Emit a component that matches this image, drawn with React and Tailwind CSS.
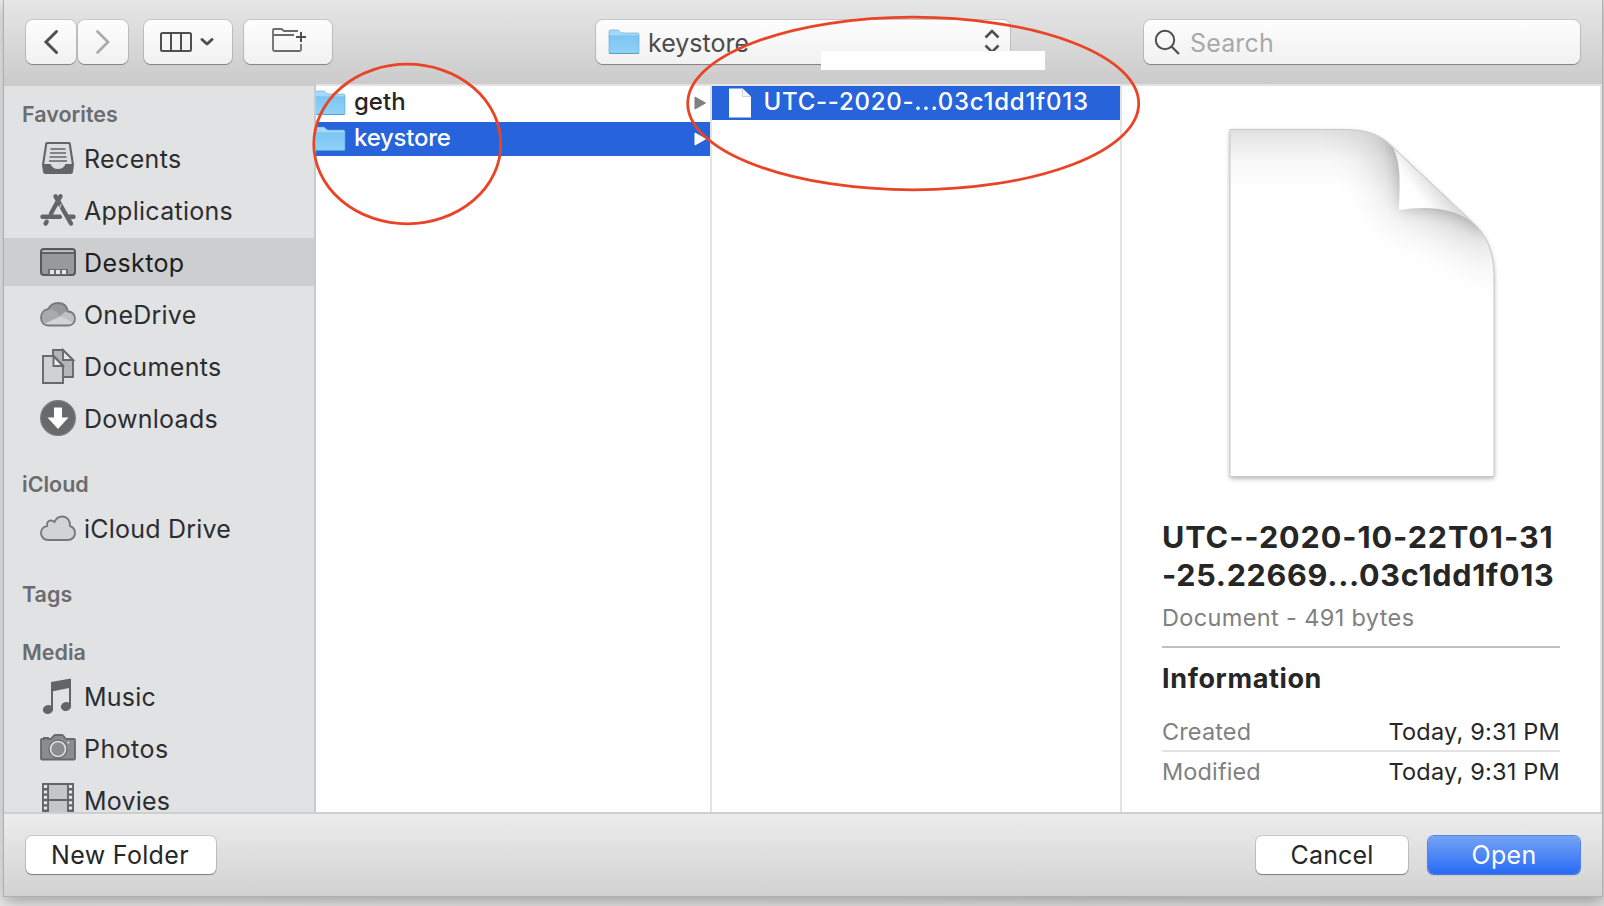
import React from "react";

function Folder({ className }) {
  return (
    <svg className={className} width="32" height="26" viewBox="0 0 32 26">
      <defs>
        <linearGradient id="fold" x1="0" y1="0" x2="0" y2="1">
          <stop offset="0" stopColor="#7cc5f2" />
          <stop offset="1" stopColor="#8fd2f8" />
        </linearGradient>
      </defs>
      <path d="M1 2.5Q1 1 2.500 1H9.500Q10.500 1 11.500 2.200Q13 4 14 4H29.500Q31 4 31 5.500V8H1Z" fill="#a5d9f8" />
      <path d="M1 6.300H31V23.500Q31 24.500 30 24.500H2Q1 24.500 1 23.500Z" fill="url(#fold)" />
      <path d="M1 2.500Q1 1 2.500 1H9.500Q10.500 1 11.500 2.200Q13 4 14 4H29.500Q31 4 31 5.500V23.500Q31 24.500 30 24.500H2Q1 24.500 1 23.500Z" fill="none" stroke="#5fa5d0" strokeWidth=".6" />
      <path d="M1.500 24.500H30.500" stroke="#5b9cc4" strokeWidth="1" />
    </svg>
  );
}

const G = "#636466";

const icons = {
  recents: (
    <g>
      <path d="M7 2H29Q30.500 2 30.800 3.500L34 24.500L33 32Q32.700 34 30.500 34H5.500Q3.300 34 3 32L2 24.500L5.200 3.500Q5.500 2 7 2Z" fill="#636466" />
      <path d="M7.300 4H28.700L31.800 24H25.500Q23.500 29 18 29T10.500 24H4.200Z" fill="#dcddde" />
      <path d="M10.500 9H25.500M10 13H26M9.500 17H26.500M9 21H27" stroke="#636466" strokeWidth="1.700" />
    </g>
  ),
  apps: (
    <g stroke={G} strokeWidth="4.400" strokeLinecap="round">
      <path d="M20.500 4.300L11 21.500M15.500 4.300L31 31.500M2.500 24.700H20M29 24.700H33.500M6.700 29.700L5.600 31.500" />
      <path d="M21 12.500L19 18L24.500 28" stroke="#e1e2e4" strokeWidth="1" fill="none" />
    </g>
  ),
  desktop: (
    <g>
      <rect x="1" y="5" width="34" height="26" rx="3" fill="#98999b" stroke="#57585a" strokeWidth="2" />
      <path d="M2.500 6.500H33.500V8H2.500Z" fill="#c5c6c8" />
      <path d="M2 9H34" stroke="#57585a" strokeWidth="1.800" />
      <path d="M8 25H28V31H8Z" fill="#6d6e70" />
      <path d="M10 26H14V30H10ZM16 26H20V30H16ZM22 26H26V30H22Z" fill="#e5e6e8" />
    </g>
  ),
  onedrive: (
    <g>
      <path d="M8.500 29.500C4 29.500 1 26.500 1 21.500C1 17 4 13.500 8.500 13C10 9.500 13.500 7 18 7C23 7 27 10 28 15.500C32 15.500 35 18.500 35 22.500C35 26.500 32.500 29.500 28 29.500Z" fill="#a9aaac" />
      <path d="M8.500 13C10 9.500 13.500 7 18 7C23 7 27 10 28 15.500Q24 15.500 20.500 20Q15 13 8.500 13Z" fill="#97989a" />
      <path d="M21 20Q24 15.500 28 15.500C32 15.500 35 18.500 35 22.500Q35 25 33.500 27Z" fill="#bfc0c2" />
      <path d="M4 28L21 20L34 27Q32 29.500 28 29.500H8.500Q6 29.500 4 28Z" fill="#d2d3d5" />
      <path d="M8.500 29.500C4 29.500 1 26.500 1 21.500C1 17 4 13.500 8.500 13C10 9.500 13.500 7 18 7C23 7 27 10 28 15.500C32 15.500 35 18.500 35 22.500C35 26.500 32.500 29.500 28 29.500Z" fill="none" stroke="#77787a" strokeWidth="1.800" />
    </g>
  ),
  documents: (
    <g stroke="#68696b" strokeWidth="1.900">
      <path d="M13 2H23L33 12V29H13Z" fill="#b4b5b7" />
      <path d="M23 2V12H33Z" fill="#e4e5e7" />
      <path d="M3 8H13.500L23 17.500V35H3Z" fill="#d0d1d3" />
      <path d="M13.500 8V18H23Z" fill="#eceded" />
    </g>
  ),
  downloads: (
    <g>
      <circle cx="18" cy="18" r="17.200" fill="#68696b" stroke="#77787a" strokeWidth="1.500" />
      <path d="M14 7.500H22V17.500H28.500L18 29L7.500 17.500H14Z" fill="#fff" />
    </g>
  ),
  icloud: (
    <path d="M8 30C4 30 1 27 1 23C1 19.500 3.500 16.500 7 16C6.500 12.500 8.500 10.500 11 10.500C12.500 10.500 13.500 11 14.500 12C16 8.500 18.500 6.500 22 6.500C27 6.500 30.500 10.500 30 16C33 17 35 19.500 35 23C35 27 32 30 28 30Z" fill="#d2d3d5" stroke="#77787a" strokeWidth="1.900" />
  ),
  music: (
    <g fill={G}>
      <path d="M11 4L31 .500V28H29V10L13 13.200V31H11Z" />
      <ellipse cx="8" cy="31.500" rx="5.200" ry="4.500" transform="rotate(-15 8 31.500)" />
      <ellipse cx="26" cy="28.500" rx="5.200" ry="4.500" transform="rotate(-15 26 28.500)" />
    </g>
  ),
  photos: (
    <g>
      <path d="M2 9H4V8H8V9H10.500Q12 8.500 13 6.500Q14 5 15.500 5H21.500Q23 5 24 6.500Q25 9 27 9H34Q35 9 35 10V28.500Q35 29.500 34 29.500H2Q1 29.500 1 28.500V10Q1 9 2 9Z" fill="#8b8c8e" stroke="#68696b" strokeWidth="1.800" />
      <circle cx="18" cy="19" r="9.600" fill="#68696b" />
      <circle cx="18" cy="19" r="7.500" fill="#8b8c8e" stroke="#dcddde" strokeWidth="1.700" />
      <circle cx="28.500" cy="12.500" r="1" fill="#e5e6e8" />
    </g>
  ),
  movies: (
    <g>
      <path d="M2 1H34V36H2Z" fill="#636466" />
      <path d="M9 3H27V17H9ZM9 19H27V36H9Z" fill="#c5c6c8" />
      <path d="M5.500 3V36M30.500 3V36" stroke="#e5e6e8" strokeWidth="3.200" strokeDasharray="3 2.400" />
    </g>
  ),
};

function Item({ icon, label, track, active }) {
  return (
    <li className={"flex h-[48px] shrink-0 items-center pl-9 " + (active ? "bg-[#cdced0] text-[#1c1d1e]" : "text-[#2c2d2e]")}>
      <svg width="36" height="36" viewBox="0 0 36 36" className="shrink-0">{icons[icon]}</svg>
      <span className={"ml-2 pt-[2px] whitespace-nowrap text-[25px] leading-[30px] " + track}>{label}</span>
    </li>
  );
}

function Heading({ children, className }) {
  return <h2 className={"shrink-0 pl-[18px] text-[21.500px] leading-[28px] font-semibold text-[#6b6c6e] " + className}>{children}</h2>;
}

const BTN = "flex h-[44px] shrink-0 items-center rounded-[7px] bg-linear-to-b from-[#fdfdfd] to-[#f1f1f1] shadow-[0_0_0_1px_rgba(0,0,0,0.11),0_1px_1px_rgba(0,0,0,0.3)] ";

function Triangle({ color }) {
  return <svg width="12" height="14" viewBox="0 0 12 14" className="mr-1"><path d="M1 1L11.500 7L1 13Z" fill={color} stroke={color} strokeLinejoin="round" /></svg>;
}

const PAGE = "M30 19.500H143C166 19.500 180 24 193 37.500L272 112C286 124 294 142 294 165V366.500H30Z";

function DocumentPreview() {
  return (
    <svg width="330" height="390" viewBox="0 0 330 390" className="ml-[78px] shrink-0">
      <defs>
        <clipPath id="pg"><path d={PAGE} /></clipPath>
        <linearGradient id="top" x1="0" y1="0" x2="0" y2="1">
          <stop offset="0" stopColor="#000" stopOpacity=".12" />
          <stop offset=".5" stopColor="#000" stopOpacity=".03" />
          <stop offset="1" stopColor="#000" stopOpacity="0" />
        </linearGradient>
        <linearGradient id="curl" x1="200" y1="98" x2="234" y2="72" gradientUnits="userSpaceOnUse">
          <stop offset="0" stopColor="#fff" />
          <stop offset=".55" stopColor="#fdfdfd" />
          <stop offset="1" stopColor="#dedede" />
        </linearGradient>
        <filter id="b1" x="-50%" y="-50%" width="200%" height="200%"><feGaussianBlur stdDeviation="26" /></filter>
        <filter id="b2" x="-50%" y="-50%" width="200%" height="200%"><feGaussianBlur stdDeviation="7" /></filter>
        <filter id="b3" x="-20%" y="-20%" width="140%" height="140%"><feGaussianBlur stdDeviation="2.500" /></filter>
      </defs>
      <path d={PAGE} fill="#000" opacity=".32" filter="url(#b3)" transform="translate(0 2)" />
      <path d={PAGE} fill="#fff" />
      <g clipPath="url(#pg)">
        <rect x="30" y="19" width="264" height="62" fill="url(#top)" />
        <path d="M150 10C190 30 196 50 199 100C230 96 275 105 300 160L310 20Z" fill="#000" opacity=".28" filter="url(#b1)" />
        <path d="M184 22C198 40 200 60 201 98C225 97 260 98 286 126L290 40Z" fill="#000" opacity=".2" filter="url(#b2)" />
      </g>
      <path d={PAGE} fill="none" stroke="#c9c9c9" strokeWidth="1" />
      <path d="M193 37.500C200 52 200.500 66 199 100C226 96 252 97 272 112Z" fill="url(#curl)" />
      <path d="M193 37.500L272 112" stroke="#c9c9c9" />
    </svg>
  );
}

export default function App() {
  return (
    <div className="relative h-[906px] w-[1604px] overflow-hidden bg-linear-to-r from-[#e9e9e9] to-[#dedede] pl-1 font-['Inter',sans-serif] antialiased">
      <div className="flex h-[896px] w-[1598px] flex-col bg-[#e1e2e4] shadow-[0_0_0_1px_#b0b0b0,0_6px_14px_rgba(0,0,0,0.3)]">
        <header className="flex h-[84px] shrink-0 items-start bg-linear-to-b from-[#e6e6e6] to-[#cbcbcb] pt-5 pl-[22px]">
          <button className={BTN + "w-[50px] justify-center"}>
            <svg width="16" height="26" viewBox="0 0 16 26"><path d="M13.500 2.500L3 13L13.500 23.500" fill="none" stroke="#4f4f4f" strokeWidth="3" strokeLinecap="round" /></svg>
          </button>
          <button className={BTN + "ml-[2px] w-[50px] justify-center"}>
            <svg width="16" height="26" viewBox="0 0 16 26"><path d="M2.500 2.500L13 13L2.500 23.500" fill="none" stroke="#a9a9a9" strokeWidth="2.600" strokeLinecap="round" /></svg>
          </button>
          <button className={BTN + "ml-4 w-[88px] pl-4"}>
            <svg width="56" height="24" viewBox="0 0 56 24" fill="none" stroke="#4f4f4f" strokeWidth="2">
              <rect x="1" y="3" width="30" height="18" rx="1.500" />
              <path d="M11 3V21M21 3V21" />
              <path d="M42 9.500L47 14L52 9.500" strokeWidth="3" strokeLinecap="round" strokeLinejoin="round" />
            </svg>
          </button>
          <button className={BTN + "ml-3 w-[88px] pl-7"}>
            <svg width="36" height="28" viewBox="0 0 36 28" fill="none" stroke="#6b6b6b" strokeWidth="1.800">
              <path d="M26 3H12L9.500 1H2Q1 1 1 2V21.500Q1 23 2.500 23H27.500Q29 23 29 21.500V16M2 7H22" />
              <path d="M24 9H34M29 4V14" stroke="#4f4f4f" strokeWidth="2" />
            </svg>
          </button>
          <button className={BTN + "ml-[264px] w-[414px] pl-3"}>
            <Folder />
            <span className="ml-[8px] pt-[2px] text-[25px] leading-[30px] text-[#4b4b4b]">keystore</span>
            <svg width="16" height="28" viewBox="0 0 16 28" className="mr-[10px] ml-auto"><path d="M1.500 9.500L8 3L14.500 9.500M1.500 17.500L8 24L14.500 17.500" fill="none" stroke="#4f4f4f" strokeWidth="2.600" /></svg>
          </button>
          <label className={BTN + "ml-[134px] w-[436px] pl-[10px]"}>
            <svg width="28" height="28" viewBox="0 0 28 28" fill="none" stroke="#4f4f4f" strokeWidth="2"><circle cx="11" cy="12" r="9.200" /><path d="M17.500 18.500L25 26" strokeWidth="2.300" /></svg>
            <span className="ml-[8px] pt-[2px] text-[25px] leading-[30px] tracking-[0.15px] text-[#a9a9a9]">Search</span>
          </label>
        </header>

        <div className="flex h-[728px] shrink-0">
          <aside className="flex w-[312px] shrink-0 flex-col overflow-hidden border-r-2 border-[#c9cacc] bg-[#e1e2e4]">
            <div className="h-[2px] shrink-0 bg-[#cbcbcb]" />
            <Heading className="mt-[14px]">Favorites</Heading>
            <ul className="mt-[6px] flex shrink-0 flex-col gap-1">
              <Item icon="recents" label="Recents" track="tracking-[0.35px]" />
              <Item icon="apps" label="Applications" track="tracking-[0.28px]" />
              <Item icon="desktop" label="Desktop" track="tracking-[0.4px]" active />
              <Item icon="onedrive" label="OneDrive" track="tracking-[0.25px]" />
              <Item icon="documents" label="Documents" track="tracking-[0.35px]" />
              <Item icon="downloads" label="Downloads" track="tracking-[0.25px]" />
            </ul>
            <Heading className="mt-[28px]">iCloud</Heading>
            <ul className="mt-[6px] shrink-0"><Item icon="icloud" label="iCloud Drive" track="tracking-[0.22px]" /></ul>
            <Heading className="mt-[28px]">Tags</Heading>
            <Heading className="mt-[30px]">Media</Heading>
            <ul className="mt-[6px] flex shrink-0 flex-col gap-1">
              <Item icon="music" label="Music" track="tracking-[0.25px]" />
              <Item icon="photos" label="Photos" track="tracking-[0.45px]" />
              <Item icon="movies" label="Movies" track="tracking-[0.2px]" />
            </ul>
          </aside>

          <section className="w-[396px] shrink-0 overflow-hidden border-t-2 border-r-2 border-[#e3e3e3] bg-white">
            <div className="flex h-[36px] items-center pb-[2px] text-[24px] font-medium text-[#262626]">
              <Folder className="-ml-[2px]" /><span className="ml-2 pb-[2px]">geth</span><span className="ml-auto"><Triangle color="#808080" /></span>
            </div>
            <div className="flex h-[34px] items-center bg-[#2763da] text-[24px] font-medium text-white">
              <Folder className="-ml-[2px]" /><span className="ml-2 pb-[2px] tracking-[-0.25px]">keystore</span><span className="ml-auto"><Triangle color="#fff" /></span>
            </div>
          </section>

          <section className="w-[410px] shrink-0 border-t-2 border-r-2 border-[#e3e3e3] bg-white">
            <div className="flex h-[34px] items-center bg-[#2763da] pl-4 text-[24px] font-medium text-white">
              <svg width="24" height="30" viewBox="0 0 24 30"><path d="M1 .500H14.500L23 9V29.500H1Z" fill="#fff" /><path d="M14.500 .500V8.500H23" fill="#f4f4f4" stroke="#c8c8c8" strokeWidth=".8" /></svg>
              <span className="ml-[11.500px] pb-[2px] tracking-[0.74px] whitespace-nowrap">UTC--2020-...03c1dd1f013</span>
            </div>
          </section>

          <section className="flex w-[480px] shrink-0 flex-col border-t-2 border-r-2 border-[#e3e3e3] bg-white pt-6">
            <DocumentPreview />
            <div className="ml-10 w-[398px]">
              <h1 className="mt-[18px] text-[30.500px] leading-[38px] font-bold whitespace-nowrap text-[#262626]">
                <span className="tracking-[0.95px]">UTC--2020-10-22T01-31</span>
                <br />
                <span className="tracking-[0.72px]">-25.22669...03c1dd1f013</span>
              </h1>
              <p className="mt-[9px] text-[23.500px] leading-[30px] tracking-[0.36px] text-[#808080]">Document - 491 bytes</p>
              <hr className="mt-[13px] border-t-2 border-[#bfbfbf]" />
              <h2 className="mt-[14px] text-[27px] leading-[34px] font-bold tracking-[0.62px] text-[#262626]">Information</h2>
              <div className="mt-[20px] flex justify-between border-b-2 border-[#e3e3e3] pb-[2px] text-[23.500px] leading-[32px]"><span className="tracking-[0.12px] text-[#808080]">Created</span><span className="tracking-[0.22px] text-[#262626]">Today, 9:31 PM</span></div>
              <div className="mt-[4px] flex justify-between text-[23.500px] leading-[32px]"><span className="tracking-[0.12px] text-[#808080]">Modified</span><span className="tracking-[0.22px] text-[#262626]">Today, 9:31 PM</span></div>
            </div>
          </section>
        </div>

        <footer className="flex h-[84px] shrink-0 items-start border-t-2 border-[#cfcfcf] bg-linear-to-b from-[#ececec] to-[#d2d2d2] pt-[22px] pr-[22px] pl-[22px] text-[25px] leading-[30px] text-[#262626]">
          <button className="h-[38px] w-[190px] rounded-[6px] bg-white pr-[2px] tracking-[0.32px] shadow-[0_0_0_1px_rgba(0,0,0,0.12),0_1px_1px_rgba(0,0,0,0.35)]">New Folder</button>
          <button className="ml-auto h-[38px] w-[152px] rounded-[6px] bg-white tracking-[0.15px] shadow-[0_0_0_1px_rgba(0,0,0,0.12),0_1px_1px_rgba(0,0,0,0.35)]">Cancel</button>
          <button className="ml-5 h-[38px] w-[152px] rounded-[6px] bg-linear-to-b from-[#74a3f4] to-[#2869f6] tracking-[0.3px] text-white shadow-[0_0_0_1px_rgba(50,110,230,0.8),0_1px_2px_rgba(0,0,0,0.3)]">Open</button>
        </footer>
      </div>

      <div className="absolute top-[51px] left-[821px] h-[19px] w-[224px] bg-white" />
      <svg width="1604" height="906" viewBox="0 0 1604 906" className="pointer-events-none absolute top-0 left-0" fill="none" stroke="#ea4426" strokeWidth="2.800">
        <ellipse cx="407.300" cy="144" rx="93.500" ry="79.800" />
        <ellipse cx="913.200" cy="103.500" rx="225.500" ry="86.300" />
      </svg>
    </div>
  );
}
